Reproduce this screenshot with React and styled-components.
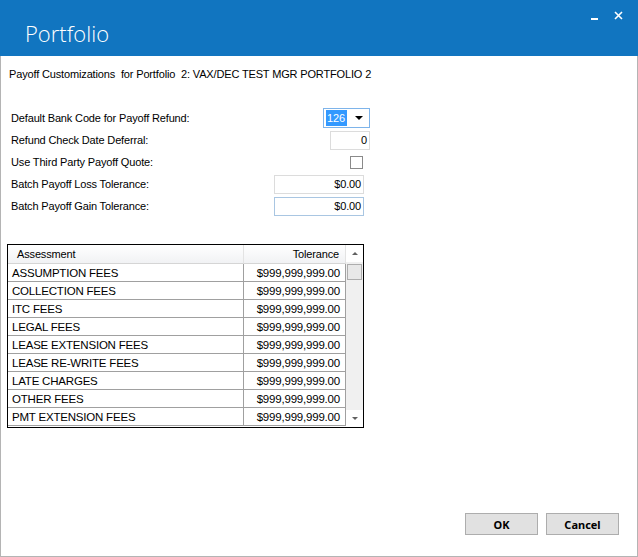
import React from 'react';
import styled, { createGlobalStyle } from 'styled-components';

const GlobalStyle = createGlobalStyle`
  html, body {
    margin: 0;
    padding: 0;
    background: #fff;
  }
  * {
    box-sizing: border-box;
  }
`;

const Window = styled.div`
  width: 638px;
  height: 557px;
  display: flex;
  flex-direction: column;
  font-family: 'Liberation Sans', Arial, sans-serif;
  font-size: 11px;
  letter-spacing: -0.15px;
  color: #000;
  overflow: hidden;
`;

const TitleBar = styled.div`
  height: 56px;
  flex: none;
  background: #1175c0;
  display: flex;
  justify-content: space-between;
  align-items: flex-start;
  padding: 0 0 0 25px;
`;

const Title = styled.div`
  font-family: 'Open Sans', 'Noto Sans', sans-serif;
  font-weight: 300;
  font-size: 22px;
  letter-spacing: 0;
  line-height: 1;
  color: #fff;
  margin-top: 22px;
`;

const Controls = styled.div`
  display: flex;
  align-items: flex-start;
  gap: 15px;
  padding: 11px 15px 0 0;
`;

const WinButton = styled.div`
  width: 9px;
  height: 9px;
  display: flex;
  align-items: flex-end;
  justify-content: center;
`;

const Body = styled.div`
  flex: 1;
  display: flex;
  flex-direction: column;
  border: 1px solid #b4b4b4;
  border-top: none;
  padding: 11px 0 0 8px;
`;

const Heading = styled.div`
  line-height: 14px;
  white-space: pre;
`;

const Form = styled.div`
  margin-top: 26px;
  width: 361px;
  display: flex;
  flex-direction: column;
`;

const Row = styled.div`
  height: 22px;
  display: flex;
  align-items: center;
  justify-content: space-between;
  padding-left: 2px;
`;

const Field = styled.div`
  width: ${p => p.$w}px;
  height: ${p => p.$h || 19}px;
  margin-right: ${p => p.$mr || 0}px;
  border: 1px solid ${p => p.$border || '#dcdcdc'};
  background: #fff;
  display: flex;
  align-items: center;
  justify-content: flex-end;
  padding-right: 2px;
  line-height: 14px;
`;

const Select = styled.div`
  width: 47px;
  height: 20px;
  border: 1px solid #7eb4ea;
  background: #fff;
  display: flex;
  align-items: center;
  justify-content: space-between;
  padding: 0 6px 0 2px;
`;

const Selected = styled.span`
  background: #3399ff;
  color: #fff;
  padding: 1px 2px 1px 1px;
  line-height: 14px;
`;

const Caret = styled.span`
  width: 0;
  height: 0;
  border-left: 4px solid transparent;
  border-right: 4px solid transparent;
  border-top: 4px solid #000;
`;

const Checkbox = styled.div`
  width: 13px;
  height: 13px;
  margin-right: 7px;
  border: 1px solid #8a8a8a;
  background: #fff;
`;

const Grid = styled.div`
  margin-top: 27px;
  margin-left: -2px;
  width: 357px;
  height: 184px;
  border: 1px solid #000;
  display: flex;
  overflow: hidden;
`;

const Table = styled.div`
  width: 338px;
  display: grid;
  grid-template-columns: 236px 102px;
  grid-template-rows: 19px;
  grid-auto-rows: 18px;
  align-content: start;
`;

const HeadCell = styled.div`
  display: flex;
  align-items: center;
  justify-content: ${p => (p.$right ? 'flex-end' : 'flex-start')};
  padding: ${p => (p.$right ? '0 6px 0 0' : '0 0 0 9px')};
  background: linear-gradient(#ffffff, #f1f2f4);
  border-bottom: 1px solid #d5d5d5;
  border-right: 1px solid #e3e3e3;
`;

const Cell = styled.div`
  display: flex;
  align-items: center;
  justify-content: ${p => (p.$right ? 'flex-end' : 'flex-start')};
  padding: ${p => (p.$right ? '0 5px 0 0' : '0 0 0 4px')};
  border-right: 1px solid #a0a0a0;
  border-bottom: 1px solid #a0a0a0;
  font-size: 11.5px;
  letter-spacing: -0.2px;
  white-space: nowrap;
`;

const Scrollbar = styled.div`
  width: 17px;
  display: flex;
  flex-direction: column;
  background: #f0f0f0;
`;

const Arrow = styled.div`
  height: 17px;
  display: flex;
  align-items: center;
  justify-content: center;
  background: #fff;
  &::after {
    content: '';
    border-left: 3px solid transparent;
    border-right: 3px solid transparent;
    ${p => (p.$down ? 'border-top: 3px solid #606060;' : 'border-bottom: 3px solid #606060;')}
  }
`;

const Thumb = styled.div`
  height: 16px;
  margin: 2px 1px 0 1px;
  border: 1px solid #adadad;
  background: #e8e8e8;
`;

const Track = styled.div`
  flex: 1;
`;

const Footer = styled.div`
  margin-top: auto;
  display: flex;
  justify-content: flex-end;
  gap: 8px;
  padding: 0 18px 21px 0;
`;

const Button = styled.button`
  width: 73px;
  height: 22px;
  border: 1px solid #adadad;
  background: #e1e1e1;
  font-family: 'Noto Sans', 'DejaVu Sans', sans-serif;
  font-weight: 700;
  font-size: 11px;
  color: #000;
  padding: 0;
`;

const fees = [
  'ASSUMPTION FEES',
  'COLLECTION FEES',
  'ITC FEES',
  'LEGAL FEES',
  'LEASE EXTENSION FEES',
  'LEASE RE-WRITE FEES',
  'LATE CHARGES',
  'OTHER FEES',
  'PMT EXTENSION FEES',
];

export default function App() {
  return (
    <>
      <GlobalStyle />
      <Window>
        <TitleBar>
          <Title>Portfolio</Title>
          <Controls>
            <WinButton>
              <svg width="7" height="2" viewBox="0 0 7 2">
                <rect width="7" height="2" fill="#fff" />
              </svg>
            </WinButton>
            <WinButton>
              <svg width="9" height="9" viewBox="0 0 9 9">
                <path d="M1 1 L8 8 M8 1 L1 8" stroke="#fff" strokeWidth="1.6" />
              </svg>
            </WinButton>
          </Controls>
        </TitleBar>
        <Body>
          <Heading>{'Payoff Customizations  for Portfolio  2: VAX/DEC TEST MGR PORTFOLIO 2'}</Heading>
          <Form>
            <Row>
              <span>Default Bank Code for Payoff Refund:</span>
              <Select>
                <Selected>126</Selected>
                <Caret />
              </Select>
            </Row>
            <Row>
              <span>Refund Check Date Deferral:</span>
              <Field $w={40}>0</Field>
            </Row>
            <Row>
              <span>Use Third Party Payoff Quote:</span>
              <Checkbox />
            </Row>
            <Row>
              <span>Batch Payoff Loss Tolerance:</span>
              <Field $w={90} $mr={6}>$0.00</Field>
            </Row>
            <Row>
              <span>Batch Payoff Gain Tolerance:</span>
              <Field $w={90} $mr={6} $border="#a9c6e2">$0.00</Field>
            </Row>
          </Form>
          <Grid>
            <Table>
              <HeadCell>Assessment</HeadCell>
              <HeadCell $right>Tolerance</HeadCell>
              {fees.map(name => (
                <React.Fragment key={name}>
                  <Cell>{name}</Cell>
                  <Cell $right>$999,999,999.00</Cell>
                </React.Fragment>
              ))}
            </Table>
            <Scrollbar>
              <Arrow />
              <Thumb />
              <Track />
              <Arrow $down />
            </Scrollbar>
          </Grid>
          <Footer>
            <Button>OK</Button>
            <Button>Cancel</Button>
          </Footer>
        </Body>
      </Window>
    </>
  );
}
